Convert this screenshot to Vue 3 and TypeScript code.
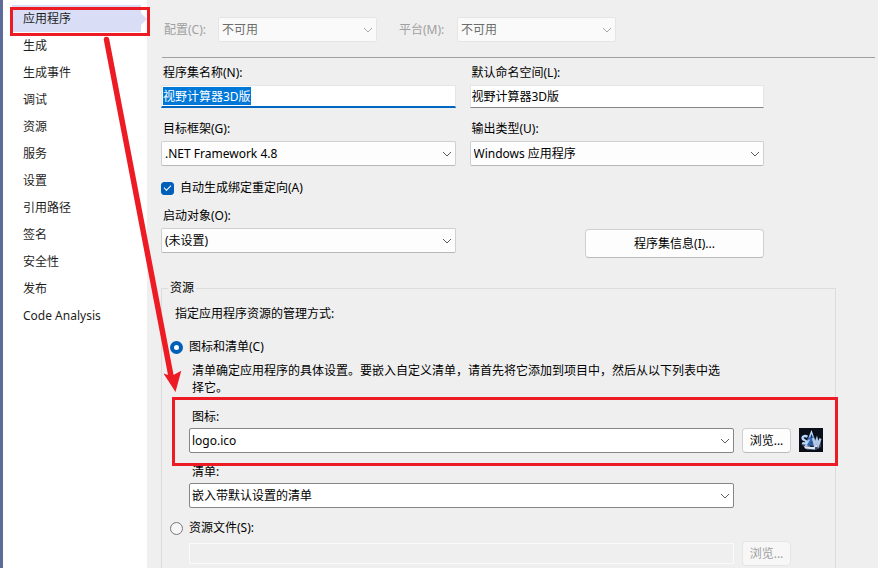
<script setup lang="ts">
import { onMounted, ref } from 'vue'

const pages: string[] = [
  '应用程序', '生成', '生成事件', '调试', '资源', '服务',
  '设置', '引用路径', '签名', '安全性', '发布', 'Code Analysis',
]
const activePage = ref('应用程序')
const assemblyName = ref('视野计算器3D版')
const rootNamespace = ref('视野计算器3D版')
const autoRedirects = ref(true)
const resourceMode = ref<'icon' | 'file'>('icon')
const resourceFile = ref('')
const nameInput = ref<HTMLInputElement | null>(null)

onMounted(() => {
  nameInput.value?.focus()
  nameInput.value?.select()
})
</script>

<template>
  <div class="page" lang="zh-CN">
    <nav class="sidebar">
      <a
        v-for="page in pages"
        :key="page"
        href="#"
        class="tab"
        :class="{ active: page === activePage }"
        @click.prevent="activePage = page"
      >{{ page }}</a>
    </nav>

    <main class="main">
      <div class="config">
        <label for="configuration">配置(C):</label>
        <div class="combo disabled">
          <select id="configuration" disabled><option>不可用</option></select>
          <svg viewBox="0 0 10 6"><path d="M1 1l4 4 4-4" /></svg>
        </div>
        <label for="platform" class="second">平台(M):</label>
        <div class="combo disabled">
          <select id="platform" disabled><option>不可用</option></select>
          <svg viewBox="0 0 10 6"><path d="M1 1l4 4 4-4" /></svg>
        </div>
      </div>

      <div class="body">
        <div class="columns">
          <div class="field">
            <label for="assembly">程序集名称(N):</label>
            <input id="assembly" ref="nameInput" v-model="assemblyName" type="text" class="text" />
          </div>
          <div class="field">
            <label for="namespace">默认命名空间(L):</label>
            <input id="namespace" v-model="rootNamespace" type="text" class="text" />
          </div>
        </div>

        <div class="columns frameworks">
          <div class="field">
            <label for="framework">目标框架(G):</label>
            <div class="combo">
              <select id="framework"><option>.NET Framework 4.8</option></select>
              <svg viewBox="0 0 10 6"><path d="M1 1l4 4 4-4" /></svg>
            </div>
          </div>
          <div class="field">
            <label for="output">输出类型(U):</label>
            <div class="combo">
              <select id="output"><option>Windows 应用程序</option></select>
              <svg viewBox="0 0 10 6"><path d="M1 1l4 4 4-4" /></svg>
            </div>
          </div>
        </div>

        <label class="check">
          <input v-model="autoRedirects" type="checkbox" />
          <span>自动生成绑定重定向(A)</span>
        </label>

        <div class="columns">
          <div class="field">
            <label for="startup">启动对象(O):</label>
            <div class="combo">
              <select id="startup"><option>(未设置)</option></select>
              <svg viewBox="0 0 10 6"><path d="M1 1l4 4 4-4" /></svg>
            </div>
          </div>
          <button type="button" class="button info">程序集信息(I)...</button>
        </div>

        <fieldset class="resources">
          <legend>资源</legend>
          <p class="intro">指定应用程序资源的管理方式:</p>

          <label class="radio">
            <input v-model="resourceMode" type="radio" name="mode" value="icon" />
            <span>图标和清单(C)</span>
          </label>
          <div class="grid">
            <p class="description">清单确定应用程序的具体设置。要嵌入自定义清单，请首先将它添加到项目中，然后从以下列表中选择它。</p>
            <label for="icon" class="icon-label">图标:</label>
            <div class="combo dark">
              <select id="icon"><option>logo.ico</option></select>
              <svg viewBox="0 0 10 6"><path d="M1 1l4 4 4-4" /></svg>
            </div>
            <button type="button" class="button">浏览...</button>
            <svg class="logo" viewBox="0 0 24 24" role="img">
              <defs>
                <linearGradient id="steel" x1="0" y1="0" x2="0" y2="1">
                  <stop offset="0" stop-color="#dcecfc" />
                  <stop offset="0.5" stop-color="#86b4ee" />
                  <stop offset="1" stop-color="#e2ebf6" />
                </linearGradient>
              </defs>
              <rect width="24" height="24" fill="#0a0e18" />
              <path d="M2 16l4 4 2 2h9l5-3v-8l-6 2z" fill="#3a4760" />
              <path d="M12.500 2L18.500 19h-3l-3-9-3.500 8H6z" fill="url(#steel)" />
              <path d="M12.500 6l1.500 4.500-3 .5z" fill="#14264a" />
              <path d="M8.500 8.800c-2-1.300-5-.8-5 1.200 0 2.700 4 1.800 4 4 0 1.700-2.500 1.700-4.200.7" fill="none" stroke="#b9d8fb" stroke-width="2.400" />
              <path d="M8.500 10.500h5l-4 6h5.500" fill="none" stroke="#2d62b4" stroke-width="2.200" />
              <path d="M14 10l1.800 7 2-5.500 1.400 5.500 2.300-6.500" fill="none" stroke="#b3c8e4" stroke-width="2.300" />
              <path d="M5 18l4 .5 7 .5v2.500l-10-1z" fill="#e0eaf6" />
              <path d="M11 17.500l4 .5-1 1-3-.3z" fill="#16233c" />
            </svg>
            <label for="manifest" class="manifest-label">清单:</label>
            <div class="combo dark">
              <select id="manifest"><option>嵌入带默认设置的清单</option></select>
              <svg viewBox="0 0 10 6"><path d="M1 1l4 4 4-4" /></svg>
            </div>
          </div>

          <label class="radio file-radio">
            <input v-model="resourceMode" type="radio" name="mode" value="file" />
            <span>资源文件(S):</span>
          </label>
          <div class="grid file-row">
            <input v-model="resourceFile" type="text" class="file" aria-label="资源文件" disabled />
            <button type="button" class="button" disabled>浏览...</button>
          </div>
        </fieldset>
      </div>
    </main>

    <svg class="marks" width="878" height="568" viewBox="0 0 878 568" aria-hidden="true">
      <rect x="11.500" y="8.500" width="137" height="26" />
      <rect x="173.500" y="398.500" width="663" height="66" />
      <path class="shaft" d="M106.500 39.500L171 376" />
      <path class="head" d="M175.500 392L163.500 373.500l8 2.500 9.800-5.200z" />
    </svg>
  </div>
</template>

<style>
body {
  background: #efefef;
}
</style>

<style scoped>
.page {
  position: relative;
  display: flex;
  height: 100vh;
  overflow: hidden;
  box-sizing: border-box;
  border-left: 3px solid #5d6b99;
  background: #efefef;
  color: #000;
  font: 12px/16px "Noto Sans", "Noto Sans CJK SC", sans-serif;
}
.page * {
  box-sizing: border-box;
}
.sidebar {
  flex: none;
  width: 144px;
  padding: 5px 6px 0 9px;
  background: #fff;
}
.tab {
  position: relative;
  display: block;
  padding-left: 11px;
  line-height: 27px;
  color: #1e1e1e;
  text-decoration: none;
}
.tab.active {
  background: #d9def6;
}
.tab.active::after {
  content: "";
  position: absolute;
  left: 100%;
  top: 8px;
  border: 6px solid transparent;
  border-left-color: #d9def6;
  border-right: 0;
}
.main {
  flex: 1;
  min-width: 0;
  padding: 17px 3px 0 14px;
}
.config {
  display: flex;
  align-items: center;
  padding: 0 0 15px 2px;
  margin-left: 1px;
  border-bottom: 1px solid #a0a0a0;
  color: #a0a0a0;
}
.config label {
  width: 54px;
}
.config .second {
  width: 58px;
  margin-left: 22px;
}
.config .combo {
  flex: 0 1 159px;
}
.body {
  padding: 7px 39px 0 0;
}
.columns {
  display: grid;
  grid-template-columns: 1fr 1fr;
  gap: 14px;
  padding-right: 72px;
}
.frameworks {
  margin: 13px 0 14px;
}
.field {
  display: flex;
  flex-direction: column;
  gap: 4px;
}
.field label {
  padding-left: 2px;
}
input,
select,
button {
  margin: 0;
  font: inherit;
  color: inherit;
  outline: none;
}
.text {
  width: 100%;
  height: 23px;
  padding: 0 1px 1px;
  border: 1px solid #e5e5e5;
  border-bottom-color: #868686;
  background: #fff;
}
.text:focus {
  padding-bottom: 0;
  border-bottom: 2px solid #0067c0;
}
.text::selection {
  background: #0078d7;
  color: #fff;
}
.combo {
  position: relative;
}
.combo select {
  display: block;
  width: 100%;
  height: 25px;
  padding: 0 24px 0 3px;
  appearance: none;
  border: 1px solid #d0d0d0;
  border-bottom-color: #b8b8b8;
  border-radius: 2px;
  background: #fdfdfd;
}
.combo svg {
  position: absolute;
  right: 4px;
  top: 10px;
  width: 10px;
  height: 6px;
  fill: none;
  stroke: #5c5c5c;
  pointer-events: none;
}
.combo.dark select {
  padding-left: 2px;
  border-color: #868686;
  background: #fff;
}
.combo.disabled select {
  border-color: #e5e5e5;
  background: #fafafa;
  color: #6d6d6d;
  opacity: 1;
}
.combo.disabled svg {
  stroke: #a8a8a8;
}
.check,
.radio {
  display: flex;
  align-items: center;
  gap: 6px;
}
.check {
  margin-bottom: 12px;
}
.check input,
.radio input {
  display: grid;
  place-items: center;
  width: 13px;
  height: 13px;
  appearance: none;
  border: 1px solid #777;
  border-radius: 3px;
  background: #f6f6f6;
}
.check input:checked {
  border-color: #005fb8;
  background: #005fb8;
}
.check input:checked::before {
  content: "";
  width: 6px;
  height: 3px;
  margin-bottom: 2px;
  border: solid #fff;
  border-width: 0 0 1px 1px;
  transform: rotate(-45deg);
}
.radio input {
  border-radius: 50%;
}
.radio input:checked {
  border: 4px solid #005fb8;
  background: #fff;
}
.button {
  height: 25px;
  padding: 0;
  border: 1px solid #d0d0d0;
  border-bottom-color: #bababa;
  border-radius: 4px;
  background: #fdfdfd;
  text-align: center;
}
.button:disabled {
  border-color: #e5e5e5;
  background: #f7f7f7;
  color: #a0a0a0;
}
.info {
  justify-self: end;
  width: 179px;
  height: 29px;
  margin-top: 21px;
}
.resources {
  min-width: 0;
  margin: 22px 0 0;
  padding: 10px 12px 24px 8px;
  border: 1px solid #dcdcdc;
}
.resources legend {
  margin-left: -2px;
  padding: 0 2px;
}
.intro {
  margin: 0 0 17px 5px;
}
.grid {
  display: grid;
  grid-template-columns: 1fr 49px 24px;
  column-gap: 8px;
  margin-left: 19px;
}
.grid > label {
  grid-column: 1 / -1;
  padding-left: 3px;
  margin-bottom: 3px;
}
.grid > .combo {
  grid-column: 1;
}
.description {
  grid-column: 1;
  margin: 7px 0 13px;
  padding: 0 8px 0 3px;
  line-height: 17px;
}
.grid > .manifest-label {
  margin-top: 11px;
}
.logo {
  width: 24px;
  height: 24px;
}
.file-radio {
  margin-top: 12px;
}
.file-row {
  align-items: center;
  margin-top: 5px;
}
.file {
  width: 100%;
  height: 21px;
  padding: 0 2px;
  border: 1px solid #fafafa;
  background: #efefef;
}
.marks {
  position: absolute;
  left: -3px;
  top: 0;
  pointer-events: none;
}
.marks rect {
  fill: none;
  stroke: #ed1c24;
  stroke-width: 3;
}
.shaft {
  fill: none;
  stroke: #ed1c24;
  stroke-width: 5.5;
  stroke-linecap: round;
}
.head {
  fill: #ed1c24;
}
</style>
